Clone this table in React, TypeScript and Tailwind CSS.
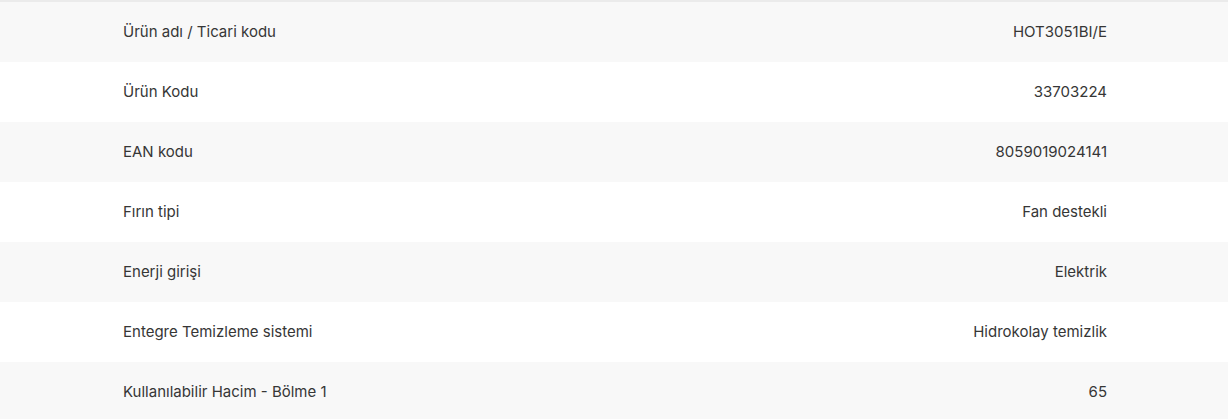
const specs: [string, string][] = [
  ['Ürün adı / Ticari kodu', 'HOT3051BI/E'],
  ['Ürün Kodu', '33703224'],
  ['EAN kodu', '8059019024141'],
  ['Fırın tipi', 'Fan destekli'],
  ['Enerji girişi', 'Elektrik'],
  ['Entegre Temizleme sistemi', 'Hidrokolay temizlik'],
  ['Kullanılabilir Hacim - Bölme 1', '65'],
];

export default function App() {
  return (
    <div className="w-full bg-white font-['Inter',sans-serif] text-[15px] text-[#363636]">
      <div className="border-t-2 border-[#ebebeb]">
        {specs.map(([label, value], i) => (
          <div
            key={label}
            className={`flex h-[60px] items-center justify-between pt-px pl-[123px] pr-[121px] ${
              i % 2 === 0 ? 'bg-[#f8f8f8]' : 'bg-white'
            }`}
          >
            <span>{label}</span>
            <span>{value}</span>
          </div>
        ))}
      </div>
    </div>
  );
}
